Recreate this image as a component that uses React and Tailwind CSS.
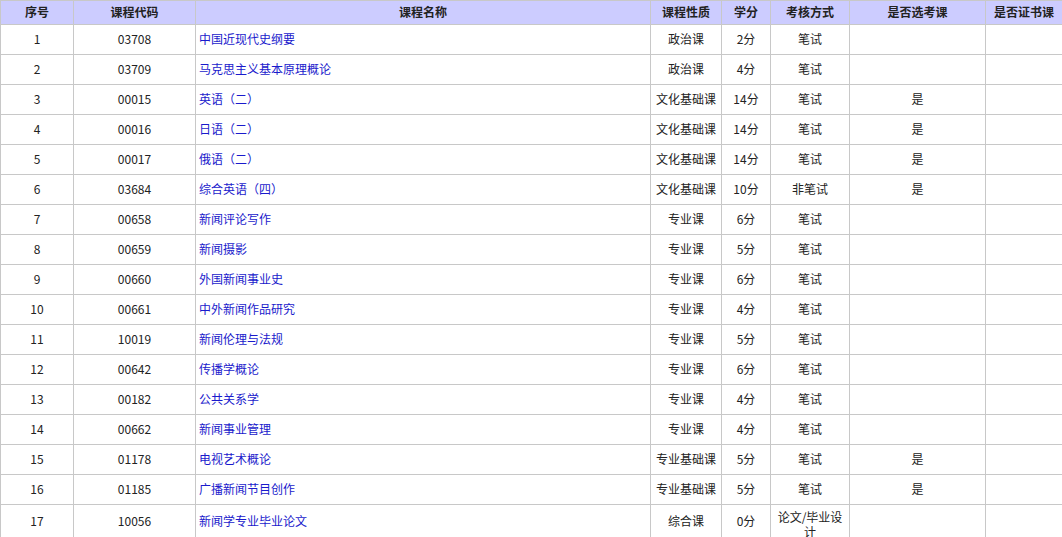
import React from "react";

const rows = [
  ["1", "03708", "中国近现代史纲要", "政治课", "2分", "笔试", ""],
  ["2", "03709", "马克思主义基本原理概论", "政治课", "4分", "笔试", ""],
  ["3", "00015", "英语（二）", "文化基础课", "14分", "笔试", "是"],
  ["4", "00016", "日语（二）", "文化基础课", "14分", "笔试", "是"],
  ["5", "00017", "俄语（二）", "文化基础课", "14分", "笔试", "是"],
  ["6", "03684", "综合英语（四）", "文化基础课", "10分", "非笔试", "是"],
  ["7", "00658", "新闻评论写作", "专业课", "6分", "笔试", ""],
  ["8", "00659", "新闻摄影", "专业课", "5分", "笔试", ""],
  ["9", "00660", "外国新闻事业史", "专业课", "6分", "笔试", ""],
  ["10", "00661", "中外新闻作品研究", "专业课", "4分", "笔试", ""],
  ["11", "10019", "新闻伦理与法规", "专业课", "5分", "笔试", ""],
  ["12", "00642", "传播学概论", "专业课", "6分", "笔试", ""],
  ["13", "00182", "公共关系学", "专业课", "4分", "笔试", ""],
  ["14", "00662", "新闻事业管理", "专业课", "4分", "笔试", ""],
  ["15", "01178", "电视艺术概论", "专业基础课", "5分", "笔试", "是"],
  ["16", "01185", "广播新闻节目创作", "专业基础课", "5分", "笔试", "是"],
  ["17", "10056", "新闻学专业毕业论文", "综合课", "0分", "论文/毕业设计", ""],
];

const heads = ["序号", "课程代码", "课程名称", "课程性质", "学分", "考核方式", "是否选考课", "是否证书课"];
const widths = [73, 122, 455, 71, 49, 79, 136, 77];

export default function App() {
  return (
    <div className="bg-white h-[537px] overflow-hidden" style={{ fontFamily: '"Microsoft YaHei","Noto Sans CJK SC",sans-serif' }}>
      <table className="w-[1062px] table-fixed border-collapse text-[12px] leading-[15px] text-[#222]">
        <colgroup>
          {widths.map((w, i) => (
            <col key={i} style={{ width: w }} />
          ))}
        </colgroup>
        <thead>
          <tr className="h-[24px] bg-[#ccccff]">
            {heads.map((h) => (
              <th key={h} className="border border-[#c8c8c8] font-bold text-[#222] text-center px-1 pb-[2px]">
                {h}
              </th>
            ))}
          </tr>
        </thead>
        <tbody>
          {rows.map((r) => (
            <tr key={r[0]} className="h-[30px]">
              <td className="border border-[#c8c8c8] text-center pb-[3px]">{r[0]}</td>
              <td className="border border-[#c8c8c8] text-center pb-[3px]">{r[1]}</td>
              <td className="border border-[#c8c8c8] px-[3px] pb-[3px] text-[#1a1acc]">{r[2]}</td>
              <td className="border border-[#c8c8c8] text-center pb-[3px]">{r[3]}</td>
              <td className="border border-[#c8c8c8] text-center pb-[3px]">{r[4]}</td>
              <td className={"border border-[#c8c8c8] text-center px-1 " + (r[0] === "17" ? "pt-[4px]" : "pb-[3px]")}>{r[5]}</td>
              <td className="border border-[#c8c8c8] text-center pb-[3px]">{r[6]}</td>
              <td className="border border-[#c8c8c8]"></td>
            </tr>
          ))}
        </tbody>
      </table>
    </div>
  );
}
